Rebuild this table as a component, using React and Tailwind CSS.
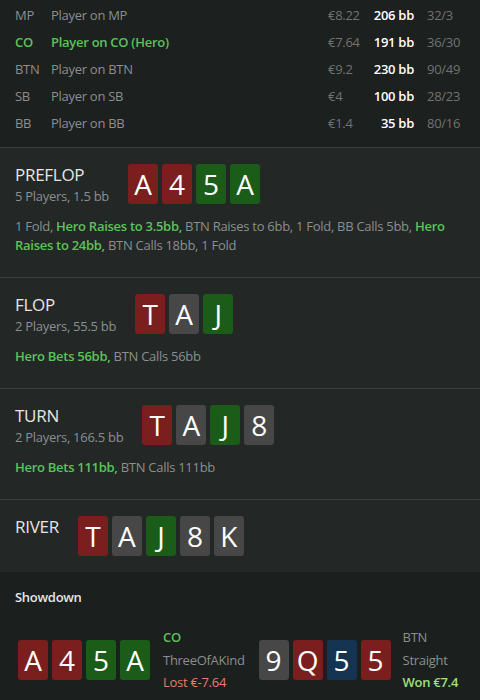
import React from 'react';

const players = [
  { pos: 'MP', name: 'Player on MP', money: '€8.22', bb: '206 bb', stats: '32/3' },
  { pos: 'CO', name: 'Player on CO (Hero)', money: '€7.64', bb: '191 bb', stats: '36/30', hero: true },
  { pos: 'BTN', name: 'Player on BTN', money: '€9.2', bb: '230 bb', stats: '90/49' },
  { pos: 'SB', name: 'Player on SB', money: '€4', bb: '100 bb', stats: '28/23' },
  { pos: 'BB', name: 'Player on BB', money: '€1.4', bb: '35 bb', stats: '80/16' },
];

// card suit colours
const suitBg = {
  h: 'bg-[#7b1e1e]',
  c: 'bg-[#1b5c19]',
  s: 'bg-[#474747]',
  d: 'bg-[#143452]',
};

const streets = [
  {
    title: 'PREFLOP',
    sub: '5 Players, 1.5 bb',
    cards: [['A', 'h'], ['4', 'h'], ['5', 'c'], ['A', 'c']],
    actions: [
      ['1 Fold, ', false],
      ['Hero Raises to 3.5bb,', true],
      [' BTN Raises to 6bb, 1 Fold, BB Calls 5bb, ', false],
      ['Hero Raises to 24bb,', true],
      [' BTN Calls 18bb, 1 Fold', false],
    ],
  },
  {
    title: 'FLOP',
    sub: '2 Players, 55.5 bb',
    cards: [['T', 'h'], ['A', 's'], ['J', 'c']],
    actions: [
      ['Hero Bets 56bb,', true],
      [' BTN Calls 56bb', false],
    ],
  },
  {
    title: 'TURN',
    sub: '2 Players, 166.5 bb',
    cards: [['T', 'h'], ['A', 's'], ['J', 'c'], ['8', 's']],
    actions: [
      ['Hero Bets 111bb,', true],
      [' BTN Calls 111bb', false],
    ],
  },
  {
    title: 'RIVER',
    cards: [['T', 'h'], ['A', 's'], ['J', 'c'], ['8', 's'], ['K', 's']],
  },
];

function Card({ rank, suit }) {
  return (
    <div
      className={`mx-[2px] flex h-[40px] w-[30px] items-center justify-center rounded-[3px] text-[28px] leading-none tracking-normal text-white ${suitBg[suit]}`}
    >
      {rank}
    </div>
  );
}

function Street({ street }) {
  return (
    <div className="border-t border-[#3a3f3d] bg-[#232726] px-[15px] pt-4 pb-4">
      <div className="flex items-start">
        <div className="mr-[17px] flex flex-col">
          <div className="text-[17px] leading-[22px] text-[#e4e6e5]">{street.title}</div>
          {street.sub && (
            <div className="mt-[2px] text-[13px] leading-[17px] text-[#8b8f8d]">{street.sub}</div>
          )}
        </div>
        <div className="flex">
          {street.cards.map(([r, s], i) => (
            <Card key={i} rank={r} suit={s} />
          ))}
        </div>
      </div>
      {street.actions && (
        <p className="mt-3 mb-[6px] text-[13px] leading-[19px] text-[#8b8f8d]">
          {street.actions.map(([t, hero], i) =>
            hero ? (
              <b key={i} className="font-semibold text-[#5cc25a]">
                {t}
              </b>
            ) : (
              t
            )
          )}
        </p>
      )}
    </div>
  );
}

export default function App() {
  return (
    <div
      className="min-h-[700px] w-[480px] bg-[#1c201f] tracking-[-0.28px]"
      style={{ fontFamily: '"Open Sans", "Noto Sans", sans-serif' }}
    >
      <div className="pt-[2px] pb-[10px] pl-[15px] pr-[13px]">
        {players.map((p) => (
          <div key={p.pos} className="flex h-[27px] items-center text-[13px]">
            <div className={`w-[36px] ${p.hero ? 'font-semibold text-[#5cc25a]' : 'text-[#8b8f8d]'}`}>{p.pos}</div>
            <div className={`flex-1 ${p.hero ? 'font-semibold text-[#5cc25a]' : 'text-[#8b8f8d]'}`}>{p.name}</div>
            <div className="w-[44px] text-[#6f7371]">{p.money}</div>
            <div className="w-[42px] text-right font-semibold text-white">{p.bb}</div>
            <div className="ml-[13px] w-[40px] text-[#6f7371]">{p.stats}</div>
          </div>
        ))}
      </div>

      {streets.map((s) => (
        <Street key={s.title} street={s} />
      ))}

      <div className="bg-[#1b1f1d] px-[15px] pt-[15px] pb-2">
        <div className="text-[13px] leading-[20px] font-semibold text-[#e4e6e5]">Showdown</div>
        <div className="mt-[19px] flex items-center pl-[1px]">
          <div className="flex">
            <Card rank="A" suit="h" />
            <Card rank="4" suit="h" />
            <Card rank="5" suit="c" />
            <Card rank="A" suit="c" />
          </div>
          <div className="ml-[11px] flex flex-col text-[13px] leading-[22.5px]">
            <span className="font-semibold text-[#5cc25a]">CO</span>
            <span className="text-[#8b8f8d]">ThreeOfAKind</span>
            <span className="text-[#ec7b6d]">Lost €-7.64</span>
          </div>
          <div className="ml-[12px] flex">
            <Card rank="9" suit="s" />
            <Card rank="Q" suit="h" />
            <Card rank="5" suit="d" />
            <Card rank="5" suit="h" />
          </div>
          <div className="ml-[10px] flex flex-col text-[13px] leading-[22.5px]">
            <span className="text-[#8b8f8d]">BTN</span>
            <span className="text-[#8b8f8d]">Straight</span>
            <span className="font-semibold text-[#9de07c]">Won €7.4</span>
          </div>
        </div>
      </div>
    </div>
  );
}
